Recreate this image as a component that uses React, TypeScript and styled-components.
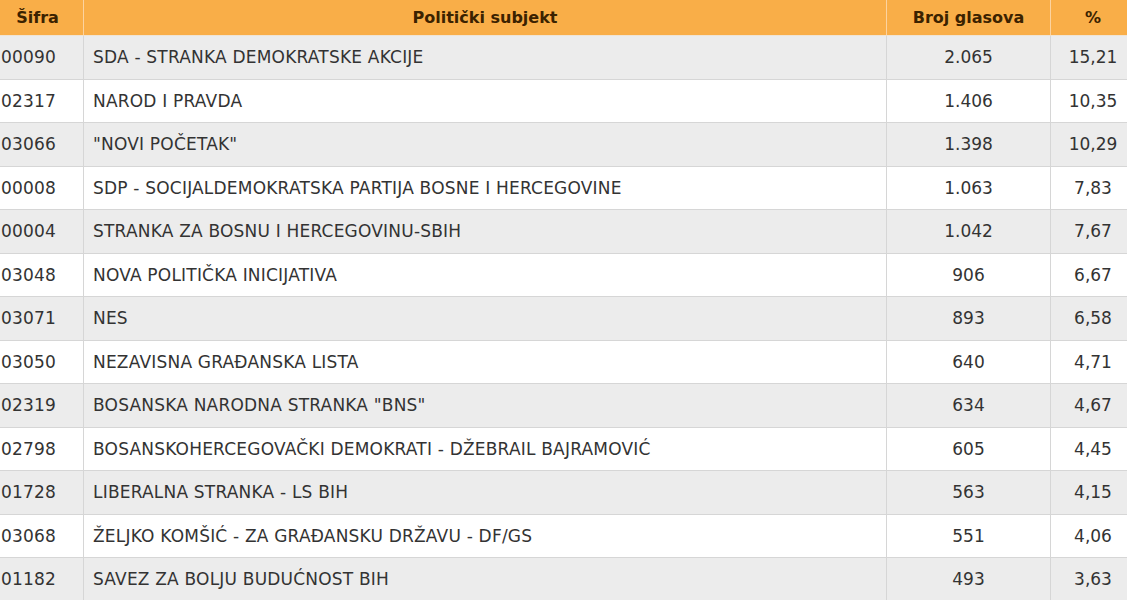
import React from "react";
import styled, { createGlobalStyle } from "styled-components";

const GlobalStyle = createGlobalStyle`
  html, body { margin: 0; padding: 0; background: #ffffff; }
  body { width: 1127px; height: 600px; overflow: hidden; }
`;

const Viewport = styled.div`
  width: 1127px;
  height: 600px;
  overflow: hidden;
`;

const Grid = styled.div`
  display: grid;
  grid-template-columns: 91px 803px 164px 85px;
  grid-auto-rows: 43.5px;
  grid-template-rows: 36px;
  width: 1143px;
  margin-left: -8px;
  font-family: "DejaVu Sans", Verdana, sans-serif;
  font-size: 17px;
  color: #333333;
`;

const HeadCell = styled.div<{ $align: "left" | "center" }>`
  display: flex;
  align-items: center;
  justify-content: ${(p) => (p.$align === "center" ? "center" : "flex-start")};
  background: #f9ae48;
  color: #3b2200;
  font-weight: bold;
  font-size: 16px;
  border-left: 1px solid #fcd3a0;
  border-bottom: 1px solid #f0e4d4;
  padding: 0 10px;
  box-sizing: border-box;
  &:first-child { border-left: none; }
`;

const Cell = styled.div<{ $align: "left" | "center"; $shade: boolean; $first?: boolean }>`
  display: flex;
  align-items: center;
  justify-content: ${(p) => (p.$align === "center" ? "center" : "flex-start")};
  background: ${(p) => (p.$shade ? "#ececec" : "#ffffff")};
  border-left: ${(p) => (p.$first ? "none" : "1px solid #d6d6d6")};
  border-bottom: 1px solid #d6d6d6;
  padding: 0 9px;
  box-sizing: border-box;
  white-space: nowrap;
  letter-spacing: ${(p) => (p.$align === "left" ? "0.2px" : "0")};
`;

const rows: [string, string, string, string][] = [
  ["00090", "SDA - STRANKA DEMOKRATSKE AKCIJE", "2.065", "15,21"],
  ["02317", "NAROD I PRAVDA", "1.406", "10,35"],
  ["03066", "\"NOVI POČETAK\"", "1.398", "10,29"],
  ["00008", "SDP - SOCIJALDEMOKRATSKA PARTIJA BOSNE I HERCEGOVINE", "1.063", "7,83"],
  ["00004", "STRANKA ZA BOSNU I HERCEGOVINU-SBIH", "1.042", "7,67"],
  ["03048", "NOVA POLITIČKA INICIJATIVA", "906", "6,67"],
  ["03071", "NES", "893", "6,58"],
  ["03050", "NEZAVISNA GRAĐANSKA LISTA", "640", "4,71"],
  ["02319", "BOSANSKA NARODNA STRANKA \"BNS\"", "634", "4,67"],
  ["02798", "BOSANSKOHERCEGOVAČKI DEMOKRATI - DŽEBRAIL BAJRAMOVIĆ", "605", "4,45"],
  ["01728", "LIBERALNA STRANKA - LS BIH", "563", "4,15"],
  ["03068", "ŽELJKO KOMŠIĆ - ZA GRAĐANSKU DRŽAVU - DF/GS", "551", "4,06"],
  ["01182", "SAVEZ ZA BOLJU BUDUĆNOST BIH", "493", "3,63"],
];

export default function App() {
  return (
    <>
      <GlobalStyle />
      <Viewport>
        <Grid>
          <HeadCell $align="center">Šifra</HeadCell>
          <HeadCell $align="center">Politički subjekt</HeadCell>
          <HeadCell $align="center">Broj glasova</HeadCell>
          <HeadCell $align="center">%</HeadCell>
          {rows.map((r, i) => (
            <React.Fragment key={r[0]}>
              <Cell $align="left" $shade={i % 2 === 0} $first>{r[0]}</Cell>
              <Cell $align="left" $shade={i % 2 === 0}>{r[1]}</Cell>
              <Cell $align="center" $shade={i % 2 === 0}>{r[2]}</Cell>
              <Cell $align="center" $shade={i % 2 === 0}>{r[3]}</Cell>
            </React.Fragment>
          ))}
        </Grid>
      </Viewport>
    </>
  );
}
